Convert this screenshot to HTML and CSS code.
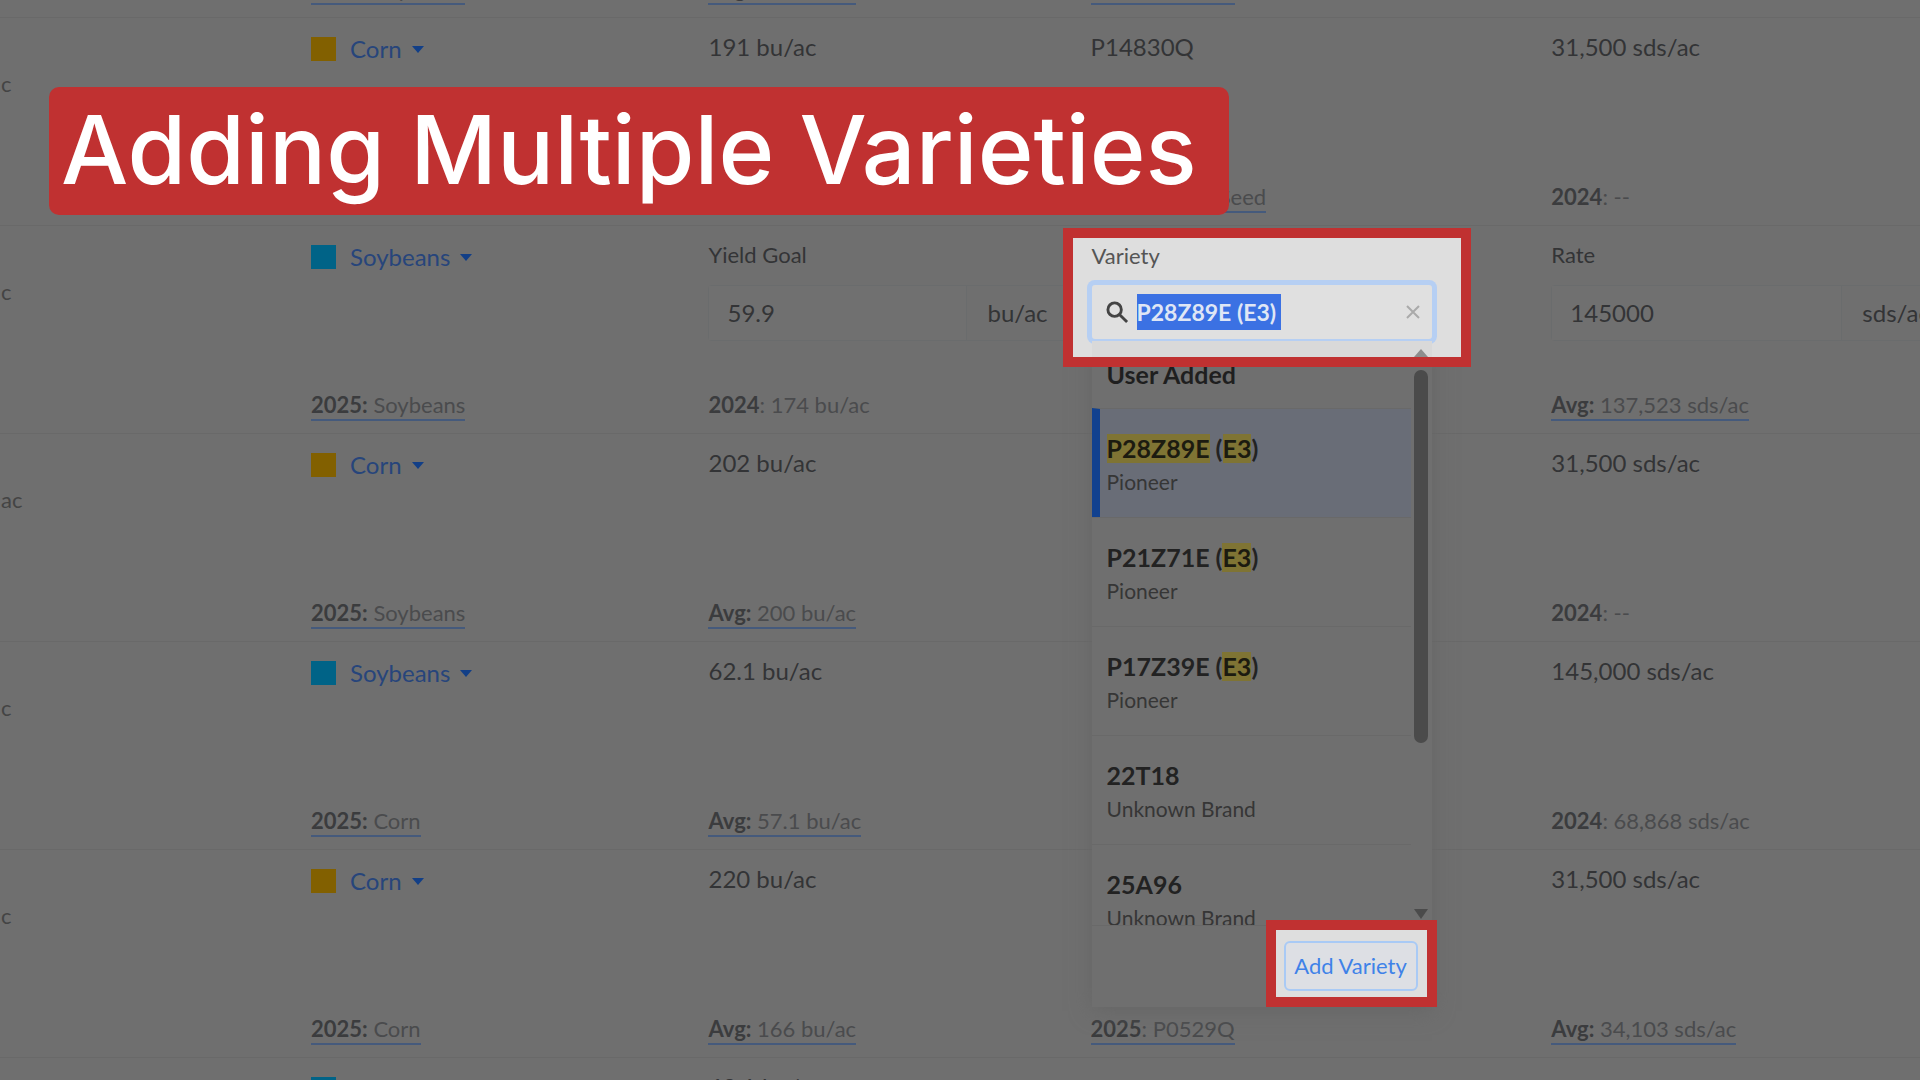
FILE: index.html
```html
<!DOCTYPE html>
<html lang="en">
<head>
<meta charset="utf-8">
<meta name="viewport" content="width=device-width, initial-scale=1">
<title>Adding Multiple Varieties</title>
<link rel="stylesheet" href="styles.css">
</head>
<body>
<main class="page">
  <h1 class="title">Adding Multiple Varieties</h1>
  <table class="plan">
    <colgroup><col class="col-field"><col class="col-crop"><col class="col-yield"><col class="col-variety"><col class="col-rate"></colgroup>
    <tbody>
      <tr>
        <td></td>
        <td><div class="cell end"><a class="note" href="#"><b>2025:</b> Soybeans</a></div></td>
        <td><div class="cell end"><a class="note" href="#"><b>Avg:</b> 200 bu/ac</a></div></td>
        <td><div class="cell end"><a class="note" href="#"><b>2025</b>: P0529Q</a></div></td>
        <td></td>
      </tr>
      <tr>
        <td><div class="cell area">c</div></td>
        <td><div class="cell"><button class="crop" type="button"><span class="swatch corn"></span>Corn<span class="caret"></span></button></div></td>
        <td><div class="cell"><span>191 bu/ac</span></div></td>
        <td><div class="cell"><span>P14830Q</span><a class="note" href="#"><b>2025</b>: Heron Seed</a></div></td>
        <td><div class="cell"><span>31,500 sds/ac</span><span class="note"><b>2024</b>: --</span></div></td>
      </tr>
      <tr>
        <td><div class="cell area">c</div></td>
        <td><div class="cell"><button class="crop" type="button"><span class="swatch soy"></span>Soybeans<span class="caret"></span></button><a class="note" href="#"><b>2025:</b> Soybeans</a></div></td>
        <td><div class="cell">
          <div class="field"><label for="yield">Yield Goal</label><div class="group"><input id="yield" type="text" value="59.9"><span class="unit">bu/ac</span></div></div>
          <span class="note"><b>2024</b>: 174 bu/ac</span></div></td>
        <td class="active">
          <div class="spotlight search-spot">
            <label for="variety">Variety</label>
            <div class="search">
              <svg class="glass" viewBox="0 0 24 24" aria-hidden="true"><circle cx="9" cy="9" r="7"/><path d="M14 14l8 8"/></svg>
              <input id="variety" type="text" value="P28Z89E (E3)">
              <button class="clear" type="button" aria-label="Clear"><svg viewBox="0 0 14 14" aria-hidden="true"><path d="M1 1l12 12M13 1L1 13"/></svg></button>
            </div>
            <div class="list-top"><span class="arrow-up"></span></div>
          </div>
          <div class="dropdown">
            <div class="scroller">
              <ul class="options">
                <li class="heading">User Added</li>
                <li class="option selected"><strong><mark>P28Z89E</mark> (<mark>E3</mark>)</strong><span>Pioneer</span></li>
                <li class="option"><strong>P21Z71E (<mark>E3</mark>)</strong><span>Pioneer</span></li>
                <li class="option"><strong>P17Z39E (<mark>E3</mark>)</strong><span>Pioneer</span></li>
                <li class="option"><strong>22T18</strong><span>Unknown Brand</span></li>
                <li class="option"><strong>25A96</strong><span>Unknown Brand</span></li>
              </ul>
              <div class="bar"><span class="thumb"></span><span class="arrow-down"></span></div>
            </div>
            <div class="actions"><div class="spotlight add-spot"><button class="add" type="button">Add Variety</button></div></div>
          </div>
        </td>
        <td><div class="cell">
          <div class="field"><label for="rate">Rate</label><div class="group wide"><input id="rate" type="text" value="145000"><span class="unit">sds/ac</span></div></div>
          <a class="note" href="#"><b>Avg:</b> 137,523 sds/ac</a></div></td>
      </tr>
      <tr>
        <td><div class="cell area">ac</div></td>
        <td><div class="cell"><button class="crop" type="button"><span class="swatch corn"></span>Corn<span class="caret"></span></button><a class="note" href="#"><b>2025:</b> Soybeans</a></div></td>
        <td><div class="cell"><span>202 bu/ac</span><a class="note" href="#"><b>Avg:</b> 200 bu/ac</a></div></td>
        <td></td>
        <td><div class="cell"><span>31,500 sds/ac</span><span class="note"><b>2024</b>: --</span></div></td>
      </tr>
      <tr>
        <td><div class="cell area">c</div></td>
        <td><div class="cell"><button class="crop" type="button"><span class="swatch soy"></span>Soybeans<span class="caret"></span></button><a class="note" href="#"><b>2025:</b> Corn</a></div></td>
        <td><div class="cell"><span>62.1 bu/ac</span><a class="note" href="#"><b>Avg:</b> 57.1 bu/ac</a></div></td>
        <td></td>
        <td><div class="cell"><span>145,000 sds/ac</span><span class="note"><b>2024</b>: 68,868 sds/ac</span></div></td>
      </tr>
      <tr>
        <td><div class="cell area">c</div></td>
        <td><div class="cell"><button class="crop" type="button"><span class="swatch corn"></span>Corn<span class="caret"></span></button><a class="note" href="#"><b>2025:</b> Corn</a></div></td>
        <td><div class="cell"><span>220 bu/ac</span><a class="note" href="#"><b>Avg:</b> 166 bu/ac</a></div></td>
        <td><div class="cell end"><a class="note" href="#"><b>2025</b>: P0529Q</a></div></td>
        <td><div class="cell"><span>31,500 sds/ac</span><a class="note" href="#"><b>Avg:</b> 34,103 sds/ac</a></div></td>
      </tr>
      <tr>
        <td></td>
        <td><div class="cell"><button class="crop" type="button"><span class="swatch soy"></span>Soybeans<span class="caret"></span></button></div></td>
        <td><div class="cell"><span>62.1 bu/ac</span></div></td>
        <td></td>
        <td></td>
      </tr>
    </tbody>
  </table>
</main>
</body>
</html>
```
FILE: styles.css
```css
* { box-sizing: border-box; }

body {
  margin: 0;
  background: #6f6f6f;
  color: #333436;
  font: 24px/28px Lato, "Open Sans", sans-serif;
}

button, input { font: inherit; color: inherit; border: 0; background: none; padding: 0; margin: 0; }

.page { position: relative; height: 100vh; overflow: hidden; }

.title {
  position: absolute;
  z-index: 5;
  top: 87px;
  left: 49px;
  margin: 0;
  padding: 0 32px 2px 12px;
  border-radius: 10px;
  background: #c03131;
  color: #fff;
  font: 500 95px/126px Inter, sans-serif;
  white-space: nowrap;
}

/* The table is scrolled so that only the foot of its first row shows. */
.plan { width: 100%; margin-top: -190px; border-collapse: collapse; table-layout: fixed; }
.col-field { width: 16.2%; }
.col-crop { width: 20.7%; }
.col-yield { width: 19.9%; }
.col-variety { width: 24%; }
.col-rate { width: 19.2%; }

.plan td { padding: 0; border-bottom: 1px solid #696969; vertical-align: top; white-space: nowrap; }

.cell {
  display: flex;
  flex-direction: column;
  justify-content: space-between;
  align-items: flex-start;
  min-height: 207px;
  padding: 15px 0 12px;
  overflow: hidden;
}
.cell.end { justify-content: flex-end; }
.cell.area { justify-content: flex-start; padding: 52px 1px 0; font-size: 22px; color: #444; }

.crop { display: flex; align-items: center; gap: 14px; margin-top: 2px; color: #27457b; cursor: pointer; }
.swatch { width: 25px; height: 24px; }
.corn { background: #826000; }
.soy { background: #006387; }
.caret { border: 6px solid transparent; border-top: 7px solid #123f87; border-bottom: 0; margin-left: -4px; }

.note { font-size: 22px; line-height: 28px; color: #4a4b4d; text-decoration: none; border-bottom: 2px solid transparent; }
.note b { color: #3b3c3e; }
a.note { border-color: #455a7c; }

.field { display: flex; flex-direction: column; gap: 16px; }
label { font-size: 22px; line-height: 28px; }
.group { display: flex; width: 360px; height: 56px; border: 1px solid #6a6c6d; border-radius: 4px; }
.group input { width: 258px; padding-left: 18px; border-right: 1px solid #6a6c6d; background: #707070; }
.group.wide { width: 396px; }
.group.wide input { width: 290px; }
.unit { padding-left: 20px; line-height: 54px; }

.active { position: relative; }
.spotlight { border: 10px solid #c03131; background: #dedede; }

.search-spot { position: absolute; z-index: 2; top: 2px; left: -28px; width: 408px; height: 139px; padding: 0 19px; overflow: hidden; }
.search-spot label { display: block; padding-top: 4px; color: #555; }
.search {
  display: flex;
  align-items: center;
  gap: 8px;
  height: 54px;
  margin: 15px 10px 0 0;
  padding: 0 12px 0 14px;
  border-radius: 3px;
  background: #e0e0e0;
  box-shadow: 0 0 0 5px #b6cff3;
}
.glass { width: 23px; height: 23px; fill: none; stroke: #444; stroke-width: 3; }
.search input { width: 144px; height: 36px; background: #3b71e3; color: #dfe6f5; font-size: 23px; font-weight: 700; }
.clear { display: flex; margin-left: auto; cursor: pointer; }
.clear svg { width: 14px; height: 14px; fill: none; stroke: #aaa; stroke-width: 2; }
.list-top { position: relative; display: flex; justify-content: flex-end; align-items: flex-start; height: 24px; margin: 2px 10px 0 0; padding: 8px 4px 0; background: #d9d9d9; }
.arrow-up { border: 7px solid transparent; border-bottom: 8px solid #8d8d8d; border-top: 0; }

.dropdown { position: absolute; z-index: 1; top: 116px; left: 1px; width: 340px; background: #6f6f6f; box-shadow: 0 4px 20px #666; }
.scroller { display: flex; height: 584px; overflow: hidden; border-bottom: 1px solid #696969; }
.options { flex: 1; margin: 0; padding: 0; list-style: none; }
.heading { height: 66px; padding: 18px 15px; color: #1f1f1f; font-size: 25px; font-weight: 700; }
.option { display: flex; flex-direction: column; gap: 5px; height: 109px; padding: 25px 15px; border-top: 1px solid #696969; font-size: 21px; color: #363636; }
.option strong { font-size: 25px; line-height: 29px; color: #222; }
.selected { padding-left: 7px; border-left: 8px solid #11418f; background: #696d77; }
mark { display: inline-block; background: #7f7434; color: #1c1b10; }
.bar { display: flex; flex-direction: column; align-items: center; justify-content: space-between; width: 21px; padding: 28px 0 6px; }
.thumb { width: 14px; height: 373px; border-radius: 7px; background: #4b4b4b; }
.arrow-down { border: 7px solid transparent; border-top: 10px solid #4b4b4b; border-bottom: 0; }

.actions { display: flex; justify-content: flex-end; height: 81px; }
.add-spot { height: 87px; margin: -6px -5px 0 0; padding: 11px 9px 0 8px; position: relative; }
.add { width: 134px; height: 50px; border: 2px solid #a9caf5; border-radius: 6px; background: #dddfe4; color: #3f82e8; font-size: 22px; cursor: pointer; }
```
